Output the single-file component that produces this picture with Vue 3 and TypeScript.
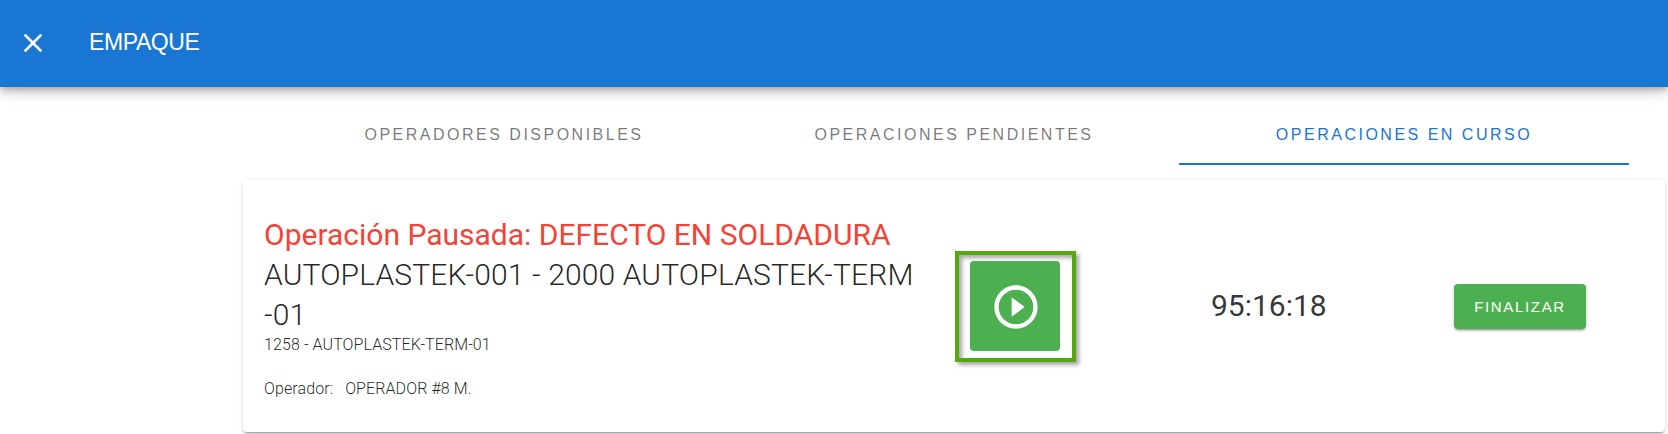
<template>
  <div class="page">
    <header class="toolbar">
      <button type="button" class="close-btn" aria-label="Cerrar">
        <svg viewBox="0 0 24 24" width="32" height="32">
          <path fill="#fff" d="M19 6.41 17.59 5 12 10.59 6.41 5 5 6.41 10.59 12 5 17.59 6.41 19 12 13.41 17.59 19 19 17.59 13.41 12z" />
        </svg>
      </button>
      <div class="toolbar-title">EMPAQUE</div>
    </header>

    <main class="content">
      <nav class="tabs">
        <div
          v-for="tab in tabs"
          :key="tab"
          class="tab"
          :class="{ 'tab--active': tab === activeTab }"
        >
          {{ tab }}
        </div>
      </nav>

      <section class="card">
        <div class="info">
          <div class="paused">Operación Pausada: DEFECTO EN SOLDADURA</div>
          <div class="name">AUTOPLASTEK-001 - 2000 AUTOPLASTEK-TERM<br />-01</div>
          <div class="code">1258 - AUTOPLASTEK-TERM-01</div>
          <div class="operator"><span>Operador:</span><span>OPERADOR #8 M.</span></div>
        </div>

        <div class="resume-cell">
          <div class="resume-frame">
            <button type="button" class="resume-btn" aria-label="Reanudar">
              <svg viewBox="0 0 24 24" width="52" height="52">
                <path fill="#fff" d="M10 16.5l6-4.5-6-4.5v9zM12 2C6.48 2 2 6.48 2 12s4.48 10 10 10 10-4.48 10-10S17.52 2 12 2zm0 18c-4.41 0-8-3.59-8-8s3.59-8 8-8 8 3.59 8 8-3.59 8-8 8z" />
              </svg>
            </button>
          </div>
        </div>

        <div class="timer">95:16:18</div>

        <div class="finish-cell">
          <button type="button" class="finish-btn">FINALIZAR</button>
        </div>
      </section>
    </main>
  </div>
</template>

<script setup lang="ts">
const tabs: string[] = [
  'OPERADORES DISPONIBLES',
  'OPERACIONES PENDIENTES',
  'OPERACIONES EN CURSO',
];
const activeTab = 'OPERACIONES EN CURSO';
</script>

<style>
html,
body {
  margin: 0;
  background: #fff;
  overflow: hidden;
}
</style>

<style scoped>
.page {
  width: 1668px;
  height: 434px;
  font-family: Roboto, 'Liberation Sans', sans-serif;
  color: rgba(0, 0, 0, 0.87);
  background: #fff;
}

.toolbar {
  height: 87px;
  background: #1976d2;
  display: flex;
  align-items: center;
  padding-left: 17px;
  box-sizing: border-box;
  box-shadow:
    0 3px 5px -1px rgba(0, 0, 0, 0.2),
    0 6px 10px 0 rgba(0, 0, 0, 0.14),
    0 1px 18px 0 rgba(0, 0, 0, 0.12);
  position: relative;
}

.close-btn {
  border: none;
  background: none;
  padding: 0;
  width: 32px;
  height: 32px;
  display: flex;
  margin-top: -1px;
}

.toolbar-title {
  margin-left: 40px;
  margin-top: -3px;
  color: #fff;
  font-family: 'Liberation Sans', Arial, sans-serif;
  font-size: 23px;
  letter-spacing: -0.4px;
}

.content {
  padding-left: 243px;
}

.tabs {
  display: grid;
  grid-template-columns: repeat(3, 450px);
  margin-left: 36px;
  height: 78px;
}

.tab {
  display: flex;
  align-items: center;
  justify-content: center;
  font-family: 'Liberation Sans', Arial, sans-serif;
  font-size: 16px;
  letter-spacing: 2.5px;
  color: rgba(0, 0, 0, 0.54);
  padding-top: 17px;
  box-sizing: border-box;
  height: 78px;
}

.tab--active {
  color: #1976d2;
  border-bottom: 2px solid #1976d2;
  padding-top: 19px;
}

.card {
  margin-top: 15px;
  width: 1422px;
  height: 252px;
  box-sizing: border-box;
  border-radius: 4px;
  background: #fff;
  box-shadow:
    0 3px 1px -2px rgba(0, 0, 0, 0.2),
    0 2px 2px 0 rgba(0, 0, 0, 0.14),
    0 1px 5px 0 rgba(0, 0, 0, 0.12);
  display: flex;
  align-items: center;
}

.info {
  width: 712px;
  box-sizing: border-box;
  padding-left: 21px;
  padding-top: 1px;
  flex: none;
}

.paused {
  font-size: 30px;
  line-height: 40px;
  color: #f44336;
}

.name {
  font-size: 30px;
  line-height: 40px;
  font-weight: 300;
  letter-spacing: 0.13px;
  white-space: nowrap;
}

.code {
  font-size: 16px;
  line-height: 20px;
  font-weight: 300;
  letter-spacing: 0.1px;
}

.operator {
  font-size: 16px;
  line-height: 20px;
  font-weight: 300;
  letter-spacing: 0.1px;
  margin-top: 24px;
  display: flex;
  gap: 12px;
}

.resume-cell {
  width: 268px;
  margin-left: -12px;
  padding-left: 12px;
  box-sizing: border-box;
  flex: none;
}

.resume-frame {
  width: 121px;
  height: 111px;
  box-sizing: border-box;
  border: 4px solid #55a80f;
  display: flex;
  align-items: center;
  justify-content: center;
  box-shadow:
    3px 3px 4px rgba(0, 0, 0, 0.35),
    inset 3px 3px 4px rgba(0, 0, 0, 0.35);
  background: #fff;
}

.resume-btn {
  width: 90px;
  height: 90px;
  border: none;
  padding: 2px 0 0 2px;
  margin: -1px 0 0 -1px;
  border-radius: 4px;
  background: #4caf50;
  display: flex;
  align-items: center;
  justify-content: center;
  box-sizing: border-box;
}

.timer {
  width: 243px;
  flex: none;
  margin-top: -1px;
  font-size: 30px;
  font-weight: 400;
  color: rgba(0, 0, 0, 0.8);
  text-align: left;
}

.finish-cell {
  flex: 1;
}

.finish-btn {
  width: 132px;
  height: 45px;
  padding: 1px 0 0;
  border: none;
  border-radius: 4px;
  background: #4caf50;
  color: #fff;
  font-family: 'Liberation Sans', Arial, sans-serif;
  font-size: 15px;
  letter-spacing: 1.66px;
  box-shadow:
    0 3px 1px -2px rgba(0, 0, 0, 0.2),
    0 2px 2px 0 rgba(0, 0, 0, 0.14),
    0 1px 5px 0 rgba(0, 0, 0, 0.12);
}
</style>
